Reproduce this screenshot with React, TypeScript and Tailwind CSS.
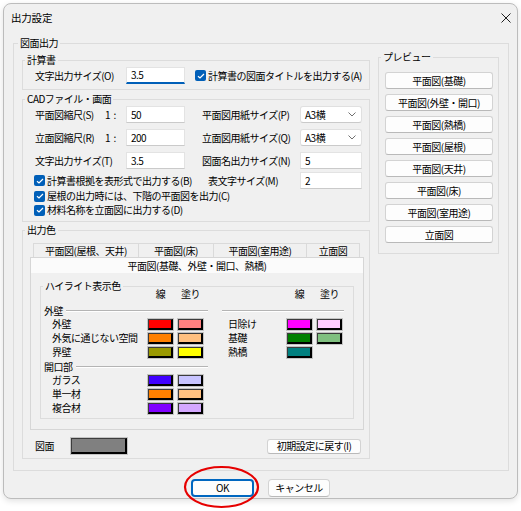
import React from 'react';

const FONT = "font-['Noto_Sans_CJK_JP','Noto_Sans',sans-serif]";

interface GroupProps {
  label: string;
  className?: string;
  legendClass?: string;
  children: React.ReactNode;
}

const Group: React.FC<GroupProps> = ({ label, className = '', legendClass = 'ml-[2px]', children }) => (
  <fieldset className={`min-w-0 border border-[#dcdcdc] ${className}`}>
    <legend className={`px-[2px] leading-[14px] ${legendClass}`}>{label}</legend>
    {children}
  </fieldset>
);

const TextBox: React.FC<{ value: string; focused?: boolean; className?: string }> = ({
  value,
  focused = false,
  className = '',
}) => (
  <div
    className={`flex h-[17px] shrink-0 items-center border border-[#e3e3e3] bg-white pl-[4px] ${
      focused ? 'border-b-2 border-b-[#005fb8]' : 'border-b-[#cacaca]'
    } ${className}`}
  >
    {value}
  </div>
);

const Select: React.FC<{ value: string }> = ({ value }) => (
  <div className="flex h-[17px] w-[62px] shrink-0 items-center justify-between rounded-[3px] border border-[#e0e0e0] border-b-[#cacaca] bg-white pl-[4px] pr-[5px]">
    <span>{value}</span>
    <svg width="8" height="5" viewBox="0 0 8 5">
      <path d="M0.5 0.5 L4 4 L7.5 0.5" fill="none" stroke="#707070" strokeWidth="1" />
    </svg>
  </div>
);

const Check: React.FC = () => (
  <span className="flex h-[11px] w-[11px] shrink-0 items-center justify-center rounded-[2px] bg-[#005fb8]">
    <svg width="8" height="6" viewBox="0 0 8 6">
      <path d="M1 3.2 L3 5 L7 1" fill="none" stroke="white" strokeWidth="1.2" />
    </svg>
  </span>
);

const Swatch: React.FC<{ color: string; size?: string }> = ({ color, size = 'h-[11px] w-[25px]' }) => (
  <span
    className={`block shrink-0 border border-[#3c3c3c] border-b-2 border-r-2 border-b-black border-r-black outline outline-1 outline-[#c4c4c4] ${size} ${color}`}
  />
);

const Button: React.FC<{ label: string; className?: string }> = ({ label, className = '' }) => (
  <div
    className={`flex items-center justify-center whitespace-nowrap rounded-[3px] border border-[#d3d3d3] border-b-[#b9b9b9] bg-[#fdfdfd] ${className}`}
  >
    {label}
  </div>
);

type Item = { name: string; line: string; fill?: string };

const leftSections: { title: string; items: Item[] }[] = [
  {
    title: '外壁',
    items: [
      { name: '外壁', line: 'bg-[#ff0000]', fill: 'bg-[#ff8080]' },
      { name: '外気に通じない空間', line: 'bg-[#ff8000]', fill: 'bg-[#ffc080]' },
      { name: '界壁', line: 'bg-[#999900]', fill: 'bg-[#ffff00]' },
    ],
  },
  {
    title: '開口部',
    items: [
      { name: 'ガラス', line: 'bg-[#4000ff]', fill: 'bg-[#c8c4ff]' },
      { name: '単一材', line: 'bg-[#ff8000]', fill: 'bg-[#ffc080]' },
      { name: '複合材', line: 'bg-[#8000ff]', fill: 'bg-[#d4a8ff]' },
    ],
  },
];

const rightItems: Item[] = [
  { name: '日除け', line: 'bg-[#ff00ff]', fill: 'bg-[#ffccff]' },
  { name: '基礎', line: 'bg-[#008000]', fill: 'bg-[#80c080]' },
  { name: '熱橋', line: 'bg-[#008080]' },
];

const previews = [
  '平面図(基礎)',
  '平面図(外壁・開口)',
  '平面図(熱橋)',
  '平面図(屋根)',
  '平面図(天井)',
  '平面図(床)',
  '平面図(室用途)',
  '立面図',
];

const tabs = [
  { label: '平面図(屋根、天井)', w: 'w-[105px]' },
  { label: '平面図(床)', w: 'w-[75px]' },
  { label: '平面図(室用途)', w: 'w-[93px]' },
  { label: '立面図', w: 'w-[54px]' },
];

const Rule: React.FC = () => <span className="block h-[2px] flex-1 border-t border-b border-t-[#b4b4b4] border-b-white" />;

const ColorHeader: React.FC<{ pr: string }> = ({ pr }) => (
  <div className={`-mt-[6px] flex h-[14px] items-center justify-end gap-[5px] ${pr}`}>
    <span className="w-[25px] text-center">線</span>
    <span className="w-[25px] text-center">塗り</span>
  </div>
);

const ColorRow: React.FC<{ item: Item; pl: string; pr: string }> = ({ item, pl, pr }) => (
  <div className={`flex h-[14px] items-center gap-[5px] ${pl} ${pr}`}>
    <span className="flex-1 whitespace-nowrap">{item.name}</span>
    <Swatch color={item.line} />
    {item.fill ? <Swatch color={item.fill} /> : <span className="w-[25px]" />}
  </div>
);

export default function App() {
  return (
    <div
      className={`relative h-[511px] w-[521px] overflow-hidden whitespace-nowrap bg-white text-[10px] leading-[14px] tracking-[-0.5px] text-black ${FONT}`}
    >
      <div className="ml-[3px] mt-[3px] flex h-[496px] w-[515px] flex-col rounded-[8px] border border-[#bcbcbc] bg-[#f0f0f0] shadow-[0_2px_6px_rgba(0,0,0,0.12)]">
        {/* title bar */}
        <div className="flex h-[27px] shrink-0 items-center justify-between pl-[7px] pr-[6px]">
          <span className="text-[10.5px] tracking-[-0.2px]">出力設定</span>
          <svg width="10" height="10" viewBox="0 0 10 10">
            <path d="M0.5 0.5 L9.5 9.5 M9.5 0.5 L0.5 9.5" stroke="#1f1f1f" strokeWidth="1" />
          </svg>
        </div>

        <Group label="図面出力" className="ml-[9px] mt-[5px] w-[496px]" legendClass="ml-[4px]">
          <div className="flex gap-[8px] pb-[11px] pl-[8px] pr-[9px]">
            {/* left column */}
            <div className="flex w-[348px] flex-col">
              <Group label="計算書" className="mt-[3px]">
                <div className="flex h-[17px] items-center pl-[12px]">
                  <span className="w-[91px]">文字出力サイズ(O)</span>
                  <TextBox value="3.5" focused className="w-[59px]" />
                  <span className="ml-[10px]">
                    <Check />
                  </span>
                  <span className="ml-[2px]">計算書の図面タイトルを出力する(A)</span>
                </div>
                <div className="h-[5px]" />
              </Group>

              <Group label="CADファイル・画面" className="mt-[2px]">
                <div className="flex flex-col pb-[4px] pl-[12px]">
                  <div className="flex h-[17px] items-center">
                    <span className="w-[70px]">平面図縮尺(S)</span>
                    <span className="w-[21px] tracking-[3px]">1:</span>
                    <TextBox value="50" className="w-[59px]" />
                    <span className="w-[17px]" />
                    <span className="w-[98px]">平面図用紙サイズ(P)</span>
                    <Select value="A3横" />
                  </div>
                  <div className="mt-[6px] flex h-[17px] items-center">
                    <span className="w-[70px]">立面図縮尺(R)</span>
                    <span className="w-[21px] tracking-[3px]">1:</span>
                    <TextBox value="200" className="w-[59px]" />
                    <span className="w-[17px]" />
                    <span className="w-[98px]">立面図用紙サイズ(Q)</span>
                    <Select value="A3横" />
                  </div>
                  <div className="mt-[6px] flex h-[17px] items-center">
                    <span className="w-[91px]">文字出力サイズ(T)</span>
                    <TextBox value="3.5" className="w-[59px]" />
                    <span className="w-[17px]" />
                    <span className="w-[98px]">図面名出力サイズ(N)</span>
                    <TextBox value="5" className="w-[62px]" />
                  </div>
                  <div className="mt-[3px] flex h-[17px] items-center">
                    <span className="-ml-[1px] flex w-[168px] items-center gap-[2px]">
                      <Check />
                      計算書根拠を表形式で出力する(B)
                    </span>
                    <span className="w-[98px] pl-[6px]">表文字サイズ(M)</span>
                    <TextBox value="2" className="w-[62px]" />
                  </div>
                  <div className="-ml-[1px] flex h-[14px] items-center gap-[2px]">
                    <Check />
                    屋根の出力時には、下階の平面図を出力(C)
                  </div>
                  <div className="-ml-[1px] flex h-[14px] items-center gap-[2px]">
                    <Check />
                    材料名称を立面図に出力する(D)
                  </div>
                </div>
              </Group>

              <Group label="出力色" className="mt-[1px]">
                <div className="flex flex-col pb-[4px]">
                  <div className="ml-[10px] mt-[6px] flex h-[14px]">
                    {tabs.map((t) => (
                      <div
                        key={t.label}
                        className={`flex items-center justify-center border-l border-t border-[#dadada] last:border-r ${t.w}`}
                      >
                        {t.label}
                      </div>
                    ))}
                  </div>
                  <div className="ml-[7px] w-[334px] border border-[#d6d6d6]">
                    <div className="flex h-[15px] items-center justify-center bg-[#fbfbfb]">
                      平面図(基礎、外壁・開口、熱橋)
                    </div>
                    <div className="pb-[10px] pl-[9px] pt-[6px]">
                      <Group label="ハイライト表示色" className="w-[314px]">
                        <div className="grid grid-cols-[164px_122px] gap-x-[14px] pb-[3px] pl-[3px]">
                          <div className="flex flex-col">
                            <ColorHeader pr="pr-[5px]" />
                            {leftSections.map((s, i) => (
                              <React.Fragment key={s.title}>
                                <div className={`flex h-[12px] items-center gap-[3px] ${i === 0 ? 'mt-[4px]' : 'mt-[2px]'}`}>
                                  <span>{s.title}</span>
                                  <Rule />
                                </div>
                                {s.items.map((it) => (
                                  <ColorRow key={it.name} item={it} pl="pl-[8px]" pr="pr-[5px]" />
                                ))}
                              </React.Fragment>
                            ))}
                          </div>
                          <div className="flex flex-col">
                            <ColorHeader pr="pr-[2px]" />
                            <div className="mt-[4px] flex h-[12px] items-center">
                              <Rule />
                            </div>
                            {rightItems.map((it) => (
                              <ColorRow key={it.name} item={it} pl="pl-[6px]" pr="pr-[2px]" />
                            ))}
                          </div>
                        </div>
                      </Group>
                    </div>
                  </div>
                  <div className="mt-[8px] flex h-[16px] items-center pl-[12px] pr-[8px]">
                    <span className="w-[36px]">図面</span>
                    <Swatch color="bg-[#808080]" size="h-[16px] w-[56px]" />
                    <Button label="初期設定に戻す(I)" className="ml-auto h-[15px] w-[94px]" />
                  </div>
                </div>
              </Group>
            </div>

            {/* preview column */}
            <Group label="プレビュー" className="w-[121px] self-start">
              <div className="flex flex-col gap-[5px] pb-[10px] pl-[6px] pt-[8px]">
                {previews.map((p) => (
                  <Button key={p} label={p} className="h-[17px] w-[108px]" />
                ))}
              </div>
            </Group>
          </div>
        </Group>

        <div className="mt-[8px] flex justify-center gap-[14px]">
          <div className="flex h-[18px] w-[63px] items-center justify-center rounded-[4px] border-2 border-[#0067c0] bg-[#fdfdfd]">
            OK
          </div>
          <Button label="キャンセル" className="h-[18px] w-[62px] rounded-[4px]" />
        </div>
      </div>

      <svg className="absolute left-[182px] top-[464px]" width="80" height="46" viewBox="0 0 80 46">
        <ellipse cx="39.5" cy="23" rx="36.5" ry="20" fill="none" stroke="#e60000" strokeWidth="2.2" />
      </svg>
    </div>
  );
}
